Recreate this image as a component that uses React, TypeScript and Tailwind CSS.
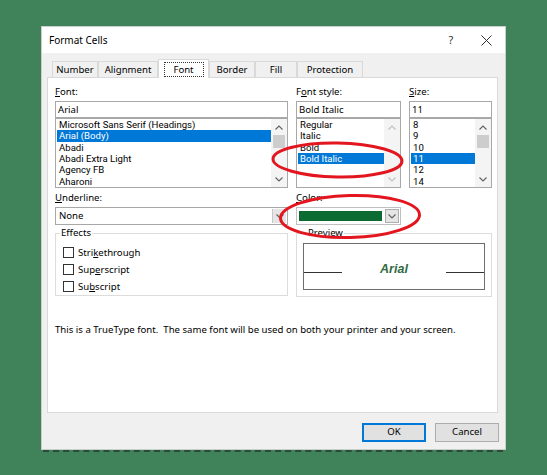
import React from "react";

const FONT = "font-['Segoe_UI','Noto_Sans',sans-serif]";

function Chevron({ dir, color }: { dir: "up" | "down"; color: string }) {
  return (
    <svg width="8" height="5" viewBox="0 0 8 5">
      <polyline
        points={dir === "up" ? "0.5,4.5 4,1 7.5,4.5" : "0.5,0.5 4,4 7.5,0.5"}
        fill="none"
        stroke={color}
        strokeWidth="1.1"
      />
    </svg>
  );
}

function ListBox({
  items,
  selected,
  thumb,
}: {
  items: string[];
  selected: number;
  thumb: boolean;
}) {
  const arrow = thumb ? "#606060" : "#c0c0c0";
  return (
    <div className="flex h-[70px] border border-[#a8a8a8] bg-white">
      <div className="flex min-w-0 flex-1 flex-col overflow-hidden pl-[1px] font-['Roboto','Noto_Sans',sans-serif] text-[9.6px]">
        {items.map((it, i) => (
          <div
            key={it}
            className={`h-[11.33px] shrink-0 whitespace-nowrap pl-[2px] leading-[11.33px] ${
              i === selected ? "bg-[#0078d7] text-white" : "text-black"
            }`}
          >
            {it}
          </div>
        ))}
      </div>
      <div className="flex w-[16px] flex-col bg-[#f4f4f4]">
        <div className="flex h-[16px] items-center justify-center">
          <Chevron dir="up" color={arrow} />
        </div>
        <div className="flex-1 px-[2px]">
          {thumb && <div className="h-[13px] bg-[#cdcdcd]" />}
        </div>
        <div className="flex h-[16px] items-center justify-center">
          <Chevron dir="down" color={arrow} />
        </div>
      </div>
    </div>
  );
}

function TextBox({ value }: { value: string }) {
  return (
    <div className="mt-[3px] h-[17px] border border-[#a8a8a8] bg-white pl-[2px] leading-[15px]">
      {value}
    </div>
  );
}

function Label({ children }: { children: React.ReactNode }) {
  return <div className="h-[12px] leading-[12px]">{children}</div>;
}

function CheckRow({ children }: { children: React.ReactNode }) {
  return (
    <div className="flex h-[17px] items-center">
      <div className="ml-[7px] h-[11px] w-[11px] border border-[#333333] bg-white" />
      <div className="ml-[4px] leading-[12px]">{children}</div>
    </div>
  );
}

function Tab({
  label,
  w,
  selected,
}: {
  label: string;
  w: string;
  selected?: boolean;
}) {
  if (selected) {
    return (
      <div
        className={`relative z-10 -mb-[1px] flex h-[19px] ${w} items-start justify-center border border-b-0 border-[#d9d9d9] bg-white pt-[2px]`}
      >
        <div className="flex h-[15px] w-[40px] items-center justify-center border border-dotted border-[#333333] pt-[1px]">
          {label}
        </div>
      </div>
    );
  }
  return (
    <div
      className={`flex h-[16px] ${w} items-center justify-center border border-b-0 border-[#d9d9d9] bg-[#f0f0f0] pt-[2px]`}
    >
      {label}
    </div>
  );
}

export default function App() {
  return (
    <div
      className={`relative h-[475px] w-[547px] overflow-hidden bg-[#40825a] pl-[41px] pt-[26px] ${FONT} text-[9.6px] text-black`}
    >
      {/* Dialog */}
      <div className="flex h-[424px] w-[465px] flex-col border border-[#c8d0cc] bg-[#f0f0f0]">
        {/* Title bar */}
        <div className="flex h-[26px] items-center bg-white pl-[7px]">
          <div className="flex-1 text-[10px]">Format Cells</div>
          <div className="w-[20px] text-center text-[11px] text-[#333333]">?</div>
          <div className="ml-[19px] mr-[13px] flex h-[12px] w-[12px] items-center justify-center">
            <svg width="11" height="11" viewBox="0 0 11 11">
              <line x1="0.5" y1="0.5" x2="10.5" y2="10.5" stroke="#333333" strokeWidth="1" />
              <line x1="10.5" y1="0.5" x2="0.5" y2="10.5" stroke="#333333" strokeWidth="1" />
            </svg>
          </div>
        </div>

        {/* Body */}
        <div className="ml-[5px] mr-[7px] mt-[6px] flex flex-col">
          {/* Tabs */}
          <div className="flex h-[18px] items-end pl-[5px]">
            <Tab label="Number" w="w-[46px]" />
            <Tab label="Alignment" w="w-[60px]" />
            <Tab label="Font" w="w-[51px]" selected />
            <Tab label="Border" w="w-[46px]" />
            <Tab label="Fill" w="w-[42px]" />
            <Tab label="Protection" w="w-[66px]" />
          </div>

          {/* Panel */}
          <div className="h-[336px] border border-[#d9d9d9] bg-white pl-[7px] pt-[8px]">
            <div className="grid grid-cols-[233px_105px_83px] gap-x-[8px]">
              {/* Font column */}
              <div className="flex flex-col">
                <Label>
                  <span className="underline">F</span>ont:
                </Label>
                <TextBox value="Arial" />
                <ListBox
                  items={[
                    "Microsoft Sans Serif (Headings)",
                    "Arial (Body)",
                    "Abadi",
                    "Abadi Extra Light",
                    "Agency FB",
                    "Aharoni",
                  ]}
                  selected={1}
                  thumb
                />
              </div>
              {/* Font style */}
              <div className="flex flex-col">
                <Label>
                  F<span className="underline">o</span>nt style:
                </Label>
                <TextBox value="Bold Italic" />
                <ListBox
                  items={["Regular", "Italic", "Bold", "Bold Italic"]}
                  selected={3}
                  thumb={false}
                />
              </div>
              {/* Size */}
              <div className="flex flex-col">
                <Label>
                  <span className="underline">S</span>ize:
                </Label>
                <TextBox value="11" />
                <ListBox items={["8", "9", "10", "11", "12", "14"]} selected={3} thumb />
              </div>

              {/* Underline */}
              <div className="mt-[4px] flex flex-col">
                <Label>
                  <span className="underline">U</span>nderline:
                </Label>
                <div className="mt-[3px] flex h-[18px] border border-[#a8a8a8] bg-white">
                  <div className="flex-1 pl-[3px] leading-[16px]">None</div>
                  <div className="m-[1px] flex w-[14px] items-center justify-center border-l border-[#c8c8c8] bg-[#e5e5e5]">
                    <Chevron dir="down" color="#606060" />
                  </div>
                </div>
              </div>
              {/* Color */}
              <div className="mt-[4px] flex flex-col">
                <Label>
                  <span className="underline">C</span>olor:
                </Label>
                <div className="mt-[3px] flex h-[18px] items-center border border-[#c0c0c0] bg-white pl-[2px] pr-[1px]">
                  <div className="h-[10px] w-[84px] bg-[#0b6b31]" />
                  <div className="ml-[3px] flex h-[14px] w-[14px] items-center justify-center border border-[#adadad] bg-[#e5e5e5]">
                    <Chevron dir="down" color="#606060" />
                  </div>
                </div>
              </div>
              <div />

              {/* Effects */}
              <fieldset className="mt-[2px] h-[69px] border border-[#dcdcdc] px-0 pb-[4px]">
                <legend className="ml-[4px] px-[1px] leading-[12px]">Effects</legend>
                <div className="mt-[5px] flex flex-col">
                  <CheckRow>
                    Stri<span className="underline">k</span>ethrough
                  </CheckRow>
                  <CheckRow>
                    Sup<span className="underline">e</span>rscript
                  </CheckRow>
                  <CheckRow>
                    Su<span className="underline">b</span>script
                  </CheckRow>
                </div>
              </fieldset>

              {/* Preview */}
              <fieldset className="col-span-2 mt-[2px] h-[70px] border border-[#dcdcdc] px-[6px]">
                <legend className="ml-[4px] px-[1px] leading-[12px]">Preview</legend>
                <div className="mt-[4px] flex h-[47px] items-center border border-[#6e6e6e] bg-white">
                  <div className="mt-[11px] h-[1px] w-[38px] bg-[#333333]" />
                  <div className="flex-1 pt-[5px] text-center font-['Liberation_Sans',Arial,sans-serif] text-[12.5px] font-bold italic leading-[15px] text-[#2f6a42]">
                    Arial
                  </div>
                  <div className="mt-[11px] h-[1px] w-[38px] bg-[#333333]" />
                </div>
              </fieldset>
            </div>

            <div className="mt-[27px] leading-[12px]">
              This is a TrueType font.&nbsp; The same font will be used on both your printer and your
              screen.
            </div>
          </div>

          {/* Buttons */}
          <div className="mt-[10px] flex justify-end gap-[9px]">
            <div className="flex h-[19px] w-[64px] items-center justify-center border-2 border-[#0078d7] bg-[#e1e1e1]">
              OK
            </div>
            <div className="mr-[-1px] flex h-[19px] w-[64px] items-center justify-center border border-[#adadad] bg-[#e1e1e1]">
              Cancel
            </div>
          </div>
        </div>
      </div>
      {/* peeking sheet row */}
      <div className="ml-[2px] h-[2px] w-[460px] border-t-2 border-dashed border-[#2c4a38]" />

      {/* Red annotation ellipses */}
      <svg
        className="pointer-events-none absolute left-0 top-0"
        width="547"
        height="475"
        viewBox="0 0 547 475"
      >
        <ellipse
          cx="337.5"
          cy="160"
          rx="64.5"
          ry="17"
          fill="none"
          stroke="#e3161f"
          strokeWidth="3"
          transform="rotate(1 337.5 160)"
        />
        <ellipse
          cx="350"
          cy="216.5"
          rx="69.5"
          ry="21"
          fill="none"
          stroke="#e3161f"
          strokeWidth="3"
          transform="rotate(-1.5 350 216)"
        />
      </svg>
    </div>
  );
}
